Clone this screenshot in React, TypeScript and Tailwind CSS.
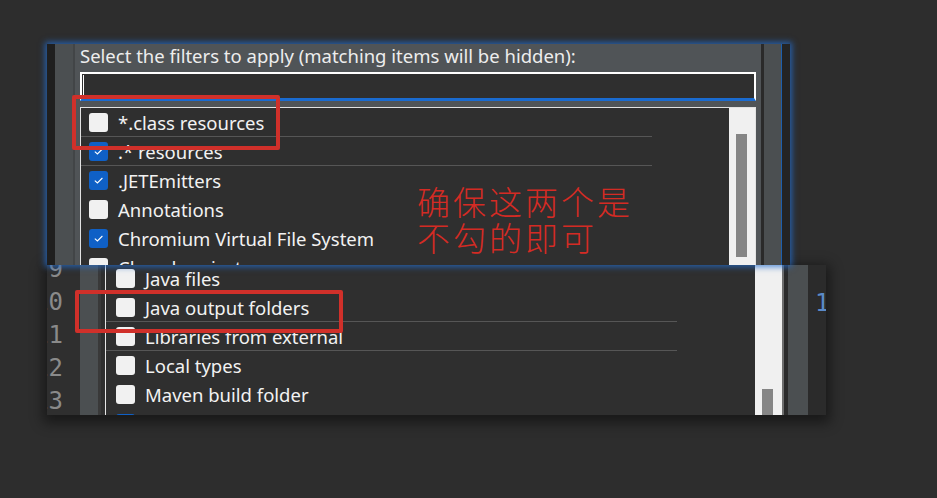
const ui = "font-['Noto_Sans',sans-serif]";

const Box = (props: { on?: boolean }) =>
  props.on ? (
    <span className="flex h-[19px] w-[19px] shrink-0 items-center justify-center rounded-[3px] bg-[#0f60c6]">
      <svg width="11" height="9" viewBox="0 0 11 9">
        <path d="M1.8 4.6 L4.4 7 L9.4 2" stroke="#ffffff" strokeWidth="1.1" fill="none" />
      </svg>
    </span>
  ) : (
    <span className="h-[19px] w-[19px] shrink-0 rounded-[3px] bg-[#f1f1f1]" />
  );

const Row = (props: { label: string; on?: boolean; line?: boolean; pad: string }) => (
  <div className="flex h-[29px] flex-col">
    <div className={`flex h-[28px] items-center gap-[10px] ${props.pad}`}>
      <Box on={props.on} />
      <span className={`${ui} whitespace-nowrap pt-px text-[18.5px] text-[#f2f2f2]`}>{props.label}</span>
    </div>
    <div className={`h-px w-[571px] ${props.line ? "bg-[#565656]" : ""}`} />
  </div>
);

const topRows = [
  { label: "*.class resources", line: true },
  { label: ".* resources", on: true, line: true },
  { label: ".JETEmitters", on: true },
  { label: "Annotations" },
  { label: "Chromium Virtual File System", on: true },
  { label: "Closed projects" },
];

const bottomRows = [
  { label: "Java files" },
  { label: "Java output folders", line: true },
  { label: "Libraries from external", line: true },
  { label: "Local types" },
  { label: "Maven build folder" },
  { label: "Nested projects", on: true },
];

export default function App() {
  return (
    <div className="relative h-[498px] w-[937px] overflow-hidden bg-[#2d2d2d]">
      {/* upper capture */}
      <div className="absolute left-[47px] top-[44px] z-10 flex h-[221px] w-[743px] overflow-hidden shadow-[0_0_6px_2px_rgba(35,110,210,0.75)]">
        <div className="w-[8px] bg-[#1f1f1f]" />
        <div className="w-[18px] bg-[#4b4f51]" />
        <div className="w-[2px] bg-[#424547]" />
        <div className="flex w-[686px] flex-col bg-[#505457] px-[5px]">
          <div className={`${ui} h-[24px] whitespace-nowrap text-[18.5px] leading-[24px] text-[#ededed]`}>
            Select the filters to apply (matching items will be hidden):
          </div>
          <div className="mt-[4px] flex h-[30px] border-x-2 border-t-2 border-b-[3px] border-x-white border-t-white border-b-[#1a6bd0] bg-[#2f2f2f] pl-[1px] pt-[1px]">
            <div className="h-[23px] w-px bg-white" />
          </div>
          <div className="mt-[6px] flex flex-1 border-x border-t border-[#e2e2e2] bg-[#2f2f2f]">
            <div className="flex flex-1 flex-col">
              {topRows.map((r) => (
                <Row key={r.label} {...r} pad="pl-[8px]" />
              ))}
            </div>
            <div className="w-[26px] bg-[#f0f0f0] pl-[7px] pt-[26px]">
              <div className="h-[123px] w-[11px] bg-[#858585]" />
            </div>
          </div>
        </div>
        <div className="w-[3px] bg-[#2a2a2a]" />
        <div className="w-[17px] bg-[#4b4f51]" />
        <div className="w-px bg-[#1d5fae]" />
        <div className="w-[8px] bg-[#242424]" />
      </div>

      {/* lower capture */}
      <div className="absolute left-[47px] top-[265px] flex h-[150px] w-[779px] overflow-hidden shadow-[0_4px_12px_4px_rgba(0,0,0,0.45)]">
        <div className="flex w-[33px] flex-col items-end overflow-hidden bg-[#2f2f2f] pr-[17px] font-['DejaVu_Sans_Mono',monospace] text-[24px] font-light text-[#8a8a8a]">
          <div className="-mt-[12px] flex flex-col items-end">
            {["9", "10", "11", "12", "13"].map((n) => (
              <div key={n} className="h-[33px] whitespace-nowrap leading-[33px]">
                {n}
              </div>
            ))}
          </div>
        </div>
        <div className="w-[18px] bg-[#4b4f51]" />
        <div className="w-[3px] bg-[#393939]" />
        <div className="w-[4px] bg-[#2f2f2f]" />
        <div className="w-px bg-[#e6e6e6]" />
        <div className="-mt-px flex w-[649px] flex-col bg-[#2f2f2f]">
          {bottomRows.map((r) => (
            <Row key={r.label} {...r} pad="pl-[10px]" />
          ))}
        </div>
        <div className="flex w-[27px] flex-col justify-end bg-[#f0f0f0] pl-[7px]">
          <div className="h-[26px] w-[11px] bg-[#858585]" />
        </div>
        <div className="w-[2px] bg-[#6e6e6e]" />
        <div className="w-[4px] bg-[#2b2b2b]" />
        <div className="w-[20px] bg-[#4b4f51]" />
        <div className="w-[18px] overflow-hidden bg-[#2b2b2b] pl-[7px] pt-[22px] font-['DejaVu_Sans_Mono',monospace] text-[24px] leading-[33px] text-[#5a8ac8]">
          1
        </div>
      </div>

      {/* annotations */}
      <div className="absolute left-[72px] top-[95px] z-20 h-[55px] w-[208px] rounded-[2px] border-[4px] border-[#d0302a]" />
      <div className="absolute left-[75px] top-[290px] z-20 h-[43px] w-[268px] rounded-[2px] border-[4px] border-[#d0302a]" />
      <div className="absolute left-[417px] top-[183px] z-20 font-['Noto_Sans_CJK_SC',sans-serif] text-[33px] font-light leading-[36px] tracking-[3px] text-[#d42b24]">
        <div>确保这两个是</div>
        <div>不勾的即可</div>
      </div>
    </div>
  );
}
